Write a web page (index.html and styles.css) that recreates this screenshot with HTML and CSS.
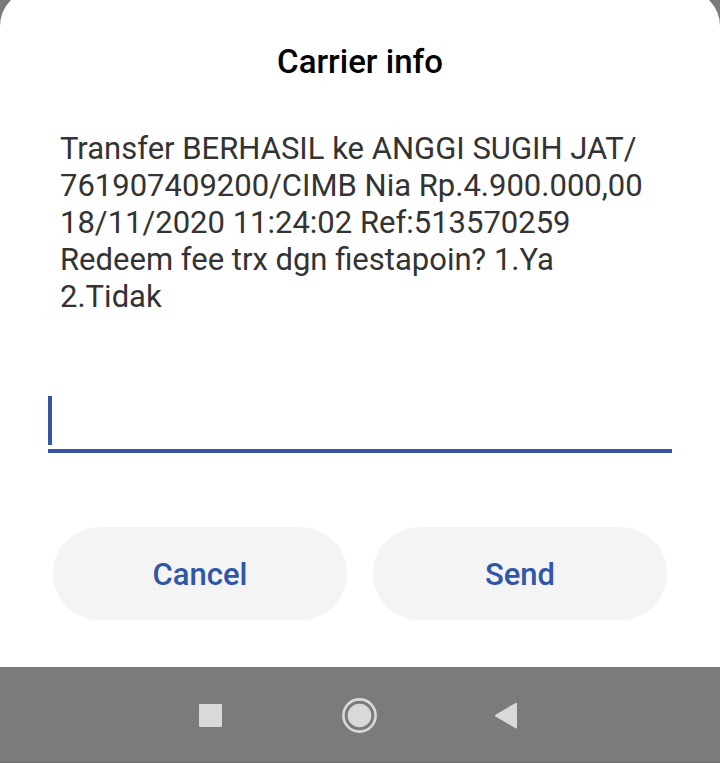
FILE: index.html
```html
<!DOCTYPE html>
<html lang="id">
<head>
<meta charset="utf-8">
<meta name="viewport" content="width=device-width, initial-scale=1">
<title>Carrier info</title>
<link rel="stylesheet" href="styles.css">
</head>
<body>
<form class="dialog" role="dialog" aria-labelledby="title">
  <h1 class="title" id="title">Carrier info</h1>
  <label class="message" for="reply">Transfer BERHASIL ke ANGGI SUGIH JAT/<br>761907409200/CIMB Nia Rp.4.900.000,00<br>18/11/2020 11:24:02 Ref:513570259<br>Redeem fee trx dgn fiestapoin? 1.Ya<br>2.Tidak</label>
  <div class="field">
    <input class="reply" id="reply" type="text" autocomplete="off">
    <span class="caret"></span>
  </div>
  <div class="actions">
    <button class="action" type="button">Cancel</button>
    <button class="action" type="submit">Send</button>
  </div>
</form>
<nav class="navbar">
  <button class="nav" type="button" aria-label="Recents"><svg viewBox="0 0 36 36"><rect x="5" y="7" width="23" height="23" rx="1"/></svg></button>
  <button class="nav" type="button" aria-label="Home"><svg viewBox="0 0 36 36"><circle cx="17.5" cy="18.5" r="11.8"/><circle class="ring" cx="17.5" cy="18.5" r="16.1"/></svg></button>
  <button class="nav" type="button" aria-label="Back"><svg viewBox="0 0 36 36"><path class="back" d="M6 18.6 26 6.8V30.4Z"/></svg></button>
</nav>
</body>
</html>
```

FILE: styles.css
```css
* {
  box-sizing: border-box;
}

body {
  margin: 0;
  min-height: 100vh;
  display: flex;
  flex-direction: column;
  overflow-x: hidden;
  background: #7b7b7b;
  font-family: Roboto, sans-serif;
}

/* The sheet's rounded top runs slightly past the top of the window. */
.dialog {
  flex: 1;
  display: flex;
  flex-direction: column;
  margin-top: -10px;
  padding: 50px 48px 47px;
  border-radius: 36px 36px 0 0;
  background: #fff;
}

.title {
  margin: 0;
  font-size: 33px;
  font-weight: 500;
  line-height: 44px;
  text-align: center;
  color: #000;
}

.message {
  margin-top: 46px;
  padding: 0 12px;
  font-size: 31px;
  line-height: 37px;
  color: #333;
}

.field {
  position: relative;
  margin-top: 81px;
}

.reply {
  display: block;
  width: 100%;
  height: 57px;
  padding: 0 4px;
  border: 0;
  border-bottom: 4px solid #3454a6;
  border-radius: 0;
  outline: 0;
  background: transparent;
  font: inherit;
  font-size: 31px;
}

.caret {
  position: absolute;
  top: 0;
  left: 0;
  width: 4px;
  height: 49px;
  background: #3454a6;
}

.actions {
  display: flex;
  gap: 26px;
  margin-top: auto;
  padding: 0 5px;
}

.action {
  flex: 1;
  height: 93px;
  padding: 2px 0 0;
  border: 0;
  border-radius: 47px;
  background: #f4f4f4;
  font: inherit;
  font-size: 31px;
  font-weight: 500;
  color: #3056a8;
}

.navbar {
  display: flex;
  justify-content: center;
  gap: 112px;
  height: 96px;
  box-shadow: inset 0 -1px #707070;
}

.nav {
  display: flex;
  align-items: center;
  padding: 0;
  border: 0;
  background: transparent;
}

.nav svg {
  width: 36px;
  height: 36px;
  fill: #d9d9d9;
}

.nav .ring {
  fill: none;
  stroke: #d9d9d9;
  stroke-width: 2.6;
}

.nav .back {
  stroke: #d9d9d9;
  stroke-width: 2;
  stroke-linejoin: round;
}
```
